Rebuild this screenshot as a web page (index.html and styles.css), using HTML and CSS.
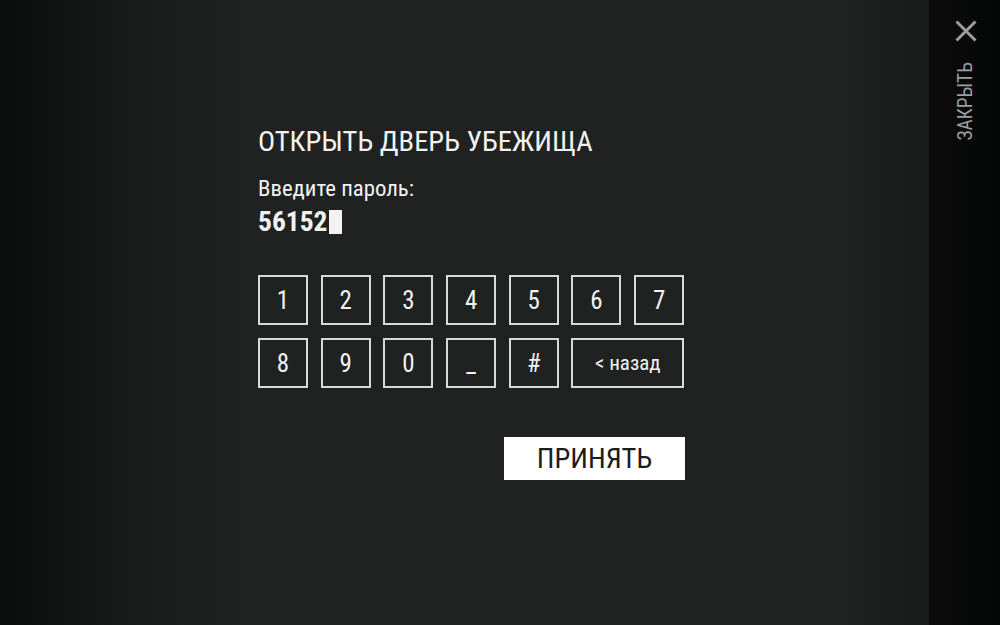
FILE: index.html
```html
<!DOCTYPE html>
<html lang="ru">
<head>
<meta charset="utf-8">
<link rel="stylesheet" href="styles.css">
</head>
<body>
<div class="screen">
  <main class="main">
    <div class="dialog">
      <h1 class="title">ОТКРЫТЬ ДВЕРЬ УБЕЖИЩА</h1>
      <div class="label">Введите пароль:</div>
      <div class="code"><span>56152</span><span class="cursor"></span></div>
      <div class="keypad">
        <button class="key">1</button>
        <button class="key">2</button>
        <button class="key">3</button>
        <button class="key">4</button>
        <button class="key">5</button>
        <button class="key">6</button>
        <button class="key">7</button>
        <button class="key">8</button>
        <button class="key">9</button>
        <button class="key">0</button>
        <button class="key">_</button>
        <button class="key">#</button>
        <button class="key key-wide">&lt; назад</button>
      </div>
      <div class="actions">
        <button class="accept">ПРИНЯТЬ</button>
      </div>
    </div>
  </main>
  <aside class="side">
    <svg class="close-icon" width="22" height="22" viewBox="0 0 22 22">
      <path d="M1.5 1.5 L20.5 20.5 M20.5 1.5 L1.5 20.5" stroke="#9d9d9d" stroke-width="3" fill="none"/>
    </svg>
    <div class="side-label">ЗАКРЫТЬ</div>
  </aside>
</div>
</body>
</html>
```
FILE: styles.css
```css
html, body {
  margin: 0;
  padding: 0;
  height: 100%;
  background: #1f2221;
}
body {
  font-family: "Roboto Condensed", Roboto, "Liberation Sans", sans-serif;
  color: #f2f2f2;
}
.screen {
  display: flex;
  width: 1000px;
  height: 625px;
  overflow: hidden;
}
.main {
  flex: 1;
  background: linear-gradient(to right, #0b0d0d 0px, #151716 90px, #1c1f1e 180px, #1f2221 260px, #1f2221 840px, #191b1a 929px);
}
.dialog {
  display: flex;
  flex-direction: column;
  padding: 127px 0 0 258px;
}
.title {
  margin: 0;
  font-size: 28.5px;
  font-weight: 400;
  line-height: 29px;
  white-space: nowrap;
}
.label {
  margin-top: 22px;
  font-size: 22.8px;
  line-height: 22px;
}
.code {
  margin-top: 8px;
  display: flex;
  align-items: center;
  font-size: 27.5px;
  font-weight: 700;
  line-height: 28px;
  height: 28px;
}
.cursor {
  margin-left: 1px;
  width: 13px;
  height: 24px;
  background: #f2f2f2;
}
.keypad {
  margin-top: 39px;
  display: grid;
  grid-template-columns: repeat(7, 50px);
  grid-auto-rows: 50px;
  column-gap: 12.7px;
  row-gap: 13px;
}
.key {
  box-sizing: border-box;
  border: 2px solid #d8d8d8;
  background: transparent;
  color: #f2f2f2;
  font-family: inherit;
  font-size: 25px;
  padding: 0;
  display: flex;
  align-items: center;
  justify-content: center;
}
.key-wide {
  grid-column: span 2;
  font-size: 21px;
}
.actions {
  width: 427px;
  display: flex;
  justify-content: flex-end;
  margin-top: 49px;
}
.accept {
  width: 181px;
  height: 43px;
  border: none;
  background: #ffffff;
  color: #1c1c1c;
  font-family: inherit;
  font-size: 28.5px;
  padding: 0;
  display: flex;
  align-items: center;
  justify-content: center;
}
.side {
  width: 71px;
  background: linear-gradient(to right, #0c0c0c, #050606);
  display: flex;
  flex-direction: column;
  align-items: center;
  padding-top: 20px;
  box-sizing: border-box;
}
.close-icon {
  display: block;
  margin-left: 2px;
}
.side-label {
  margin-top: 20px;
  margin-left: 2px;
  writing-mode: vertical-rl;
  transform: rotate(180deg);
  color: #9d9d9d;
  font-size: 19.5px;
  line-height: 20px;
  white-space: nowrap;
}
```
